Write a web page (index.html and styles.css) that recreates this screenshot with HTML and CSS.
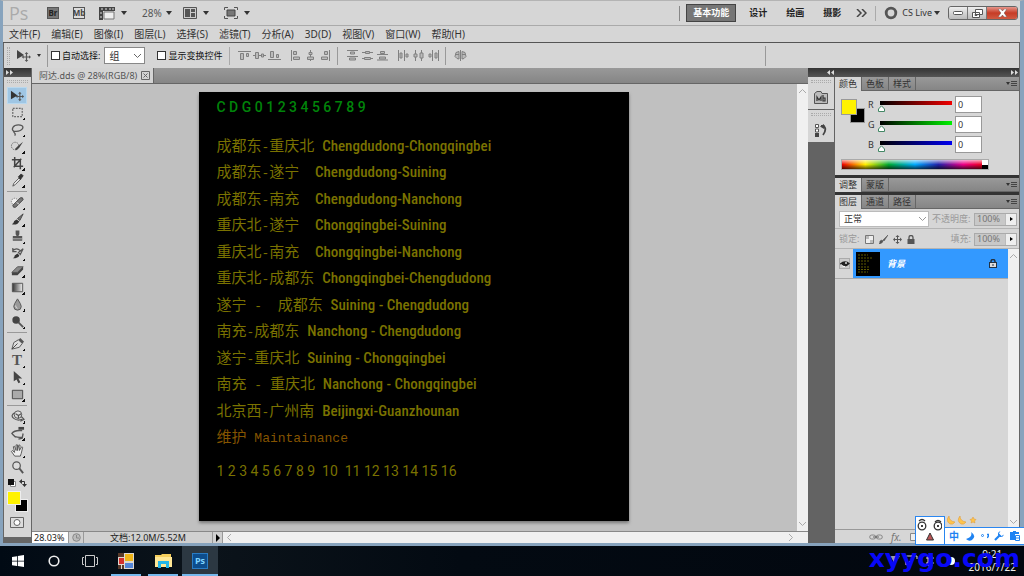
FILE: index.html
```html
<!DOCTYPE html>
<html lang="zh-CN">
<head>
<meta charset="utf-8">
<title>阿达.dds @ 28%(RGB/8)</title>
<link rel="stylesheet" href="styles.css">
</head>
<body>
<div class="window">
  <header class="appbar">
    <span class="logo">Ps</span>
    <button class="box dark" aria-label="Bridge">Br</button>
    <button class="box" aria-label="Mini Bridge">Mb</button>
    <button class="drop" aria-label="查看额外内容"><svg width="16" height="13" viewBox="0 0 16 13"><path d="M0 0h16v4H4v9H0z" fill="#444"/><path d="M2 2h2M6 2h2M10 2h2M13 2h2M2 5v2M2 9v2" stroke="#ddd"/><path d="M5 5h10v7H5z" fill="#eee" stroke="#777"/></svg><i class="caret"></i></button>
    <button class="drop zoomlevel">28%<i class="caret"></i></button>
    <button class="drop" aria-label="排列文档"><svg width="14" height="12" viewBox="0 0 14 12"><path d="M.5.5h13v11H.5z" fill="#ccc" stroke="#555"/><path d="M2 2h5v8H2zM8 2h4v3H8zM8 6h4v4H8z" fill="#555"/></svg><i class="caret"></i></button>
    <button class="drop" aria-label="屏幕模式"><svg width="14" height="12" viewBox="0 0 14 12"><path d="M.5 3V.5H4M10 .5h3.500V3M13.500 9v2.500H10M4 11.500H.5V9" fill="none" stroke="#555"/><path d="M3 3h8v6H3z" fill="#777" stroke="#444"/></svg><i class="caret"></i></button>
    <div class="workspaces">
      <button class="ws active">基本功能</button>
      <button class="ws">设计</button>
      <button class="ws">绘画</button>
      <button class="ws">摄影</button>
      <button class="more" aria-label="更多"><svg width="11" height="8" viewBox="0 0 11 8"><path d="M1 0l4 4-4 4M6 0l4 4-4 4" fill="none" stroke="#444" stroke-width="1.500"/></svg></button>
    </div>
    <button class="cslive"><svg width="14" height="14" viewBox="0 0 14 14"><circle cx="7" cy="7" r="4.800" fill="none" stroke="#555" stroke-width="2.800"/></svg>CS Live<i class="caret"></i></button>
    <div class="winbtns">
      <button aria-label="最小化"><svg width="10" height="5" viewBox="0 0 10 5"><rect x=".5" y=".5" width="9" height="3" rx="1" fill="#fff" stroke="#555"/></svg></button>
      <button aria-label="还原"><svg width="11" height="9" viewBox="0 0 11 9"><path d="M3.500.5h7v5h-7zM.5 3.500h7v5h-7z" fill="#fff" stroke="#555"/><path d="M3 5.500h2v1H3z" fill="#fff" stroke="#555"/></svg></button>
      <button class="close" aria-label="关闭"><svg width="9" height="8" viewBox="0 0 9 8"><path d="M0 0h3l1.500 2L6 0h3L6.200 4 9 8H6L4.500 6 3 8H0l2.800-4z" fill="#fff" stroke="#644" stroke-width=".5"/></svg></button>
    </div>
  </header>

  <nav class="menubar">
    <button>文件(F)</button><button>编辑(E)</button><button>图像(I)</button><button>图层(L)</button><button>选择(S)</button><button>滤镜(T)</button><button>分析(A)</button><button>3D(D)</button><button>视图(V)</button><button>窗口(W)</button><button>帮助(H)</button>
  </nav>

  <div class="options">
    <i class="vgrip"></i>
    <button class="drop current" aria-label="移动工具"><svg width="14" height="12" viewBox="0 0 14 12"><path d="M0 0l7 5-7 4z" fill="#444"/><path d="M9.500 3.500v7M6 7h7" stroke="#555" stroke-width="1.200"/><path d="M9.500 2l1.800 2H7.700zM9.500 12l1.800-2H7.700zM4.700 7l2-1.800v3.600zM14 7l-2-1.800v3.600z" fill="#555"/></svg><i class="caret small"></i></button>
    <label class="check"><input type="checkbox">自动选择:</label>
    <select class="group" aria-label="自动选择"><option>组</option></select>
    <label class="check"><input type="checkbox">显示变换控件</label>
    <div class="set">
      <button aria-label="顶对齐"><svg class="al" viewBox="0 0 13 11"><path d="M0 1.500h13"/><path d="M2.500 3.500h3v6h-3zM8.500 3.500h2v3h-2z"/></svg></button>
      <button aria-label="垂直居中对齐"><svg class="al" viewBox="0 0 13 11"><path d="M0 5.500h13"/><path d="M2.500 2.500h3v6h-3zM8.500 4h2v3h-2z"/></svg></button>
      <button aria-label="底对齐"><svg class="al" viewBox="0 0 13 11"><path d="M0 9.500h13"/><path d="M2.500 1.500h3v6h-3zM8.500 4.500h2v3h-2z"/></svg></button>
    </div>
    <div class="set">
      <button aria-label="左对齐"><svg class="al" viewBox="0 0 13 11"><path d="M2.500 0v11"/><path d="M4.500 1.500h3v3h-3zM4.500 7h6v2.500h-6z"/></svg></button>
      <button aria-label="水平居中对齐"><svg class="al" viewBox="0 0 13 11"><path d="M6.500 0v11"/><path d="M5 2.500h3v2H5zM3.500 7h6v2.500h-6z"/></svg></button>
      <button aria-label="右对齐"><svg class="al" viewBox="0 0 13 11"><path d="M10.500 0v11"/><path d="M5.500 1.500h3v3h-3zM2.500 7h6v2.500h-6z"/></svg></button>
    </div>
    <div class="set ruled">
      <button aria-label="按顶分布"><svg class="al" viewBox="0 0 13 11"><path d="M1 .5h11M1 6.500h11"/><path d="M4.500 2h4v2h-4zM3.500 8h6v2h-6z"/></svg></button>
      <button aria-label="垂直居中分布"><svg class="al" viewBox="0 0 13 11"><path d="M1 2.500h11M1 8.500h11"/><path d="M4.500 1.500h4v2h-4zM3.500 7.500h6v2h-6z"/></svg></button>
      <button aria-label="按底分布"><svg class="al" viewBox="0 0 13 11"><path d="M1 4.500h11M1 10h11"/><path d="M4.500 1.500h4v2h-4zM3.500 7h6v2h-6z"/></svg></button>
    </div>
    <div class="set">
      <button aria-label="按左分布"><svg class="al" viewBox="0 0 13 11"><path d="M1.500 0v11M7.500 0v11"/><path d="M3 3h2v5H3zM9 4h2v3H9z"/></svg></button>
      <button aria-label="水平居中分布"><svg class="al" viewBox="0 0 13 11"><path d="M3.500 0v11M9.500 0v11"/><path d="M2 4h3v3H2zM8 3h3v5H8z"/></svg></button>
      <button aria-label="按右分布"><svg class="al" viewBox="0 0 13 11"><path d="M5.500 0v11M11.500 0v11"/><path d="M2 4h2v3H2zM8 3h2v5H8z"/></svg></button>
    </div>
    <div class="set ruled">
      <button aria-label="自动对齐图层"><svg class="al" viewBox="0 0 13 11"><path d="M6.500 0v11M5 1.500L2 2.500l-1 4 2 2 2 .5zM8 1.500l3 1 1 4-2 2-2 .5zM2 4.500h3M8 4.500h3" /></svg></button>
    </div>
    <i class="endrule"></i>
  </div>

  <div class="workspace">
    <aside class="tools">
      <div class="dockhead"><svg width="7" height="5" viewBox="0 0 7 5"><path d="M0 0l3 2.500L0 5zM4 0l3 2.500L4 5z" fill="#ddd"/></svg></div>
      <i class="hgrip"></i>
      <div class="toollist">
        <button class="on" aria-label="移动"><svg viewBox="0 0 16 16"><path d="M1 3l7 5-7 4z" fill="#333"/><path d="M10.500 5.500v7M7 9h7" stroke="#555" stroke-width="1.200"/><path d="M10.500 4l1.800 2H8.700zM10.500 14l1.800-2H8.700zM6 9l2-1.800v3.600zM15 9l-2-1.800v3.600z" fill="#555"/></svg></button>
        <button class="sub" aria-label="矩形选框"><svg viewBox="0 0 16 16"><path d="M3 3.500h10v9H3z" fill="none" stroke="#444" stroke-dasharray="2 1.200"/></svg></button>
        <button class="sub" aria-label="套索"><svg viewBox="0 0 16 16"><path d="M4 10C1 8 3 3 9 3s6 4 2 6-7 0-7 1.500 3 1 1 4" fill="none" stroke="#555" stroke-width="1.300"/></svg></button>
        <button class="sub" aria-label="快速选择"><svg viewBox="0 0 16 16"><circle cx="5.500" cy="7.500" r="4" fill="none" stroke="#666" stroke-dasharray="1.500 1"/><path d="M5 11l4-4 5-4-4 6-3 3z" fill="#444"/></svg></button>
        <button class="sub" aria-label="裁剪"><svg viewBox="0 0 16 16"><path d="M5 1v10h9M2 4h9v10M4 12l8-9" fill="none" stroke="#444" stroke-width="1.600"/></svg></button>
        <button class="sub" aria-label="吸管"><svg viewBox="0 0 16 16"><path d="M3 14l1-3 6-6 1.500 1.500-6 6z" fill="#eee" stroke="#555"/><path d="M9 4l3-3 2 2-3 4z" fill="#333" stroke="#333"/></svg></button>
        <hr>
        <button class="sub" aria-label="修复画笔"><svg viewBox="0 0 16 16"><circle cx="5" cy="7" r="3.500" fill="#eee" stroke="#777" stroke-dasharray="1.500 1"/><path d="M3 11l8-8q3-1 3 2l-8 8q-3 1-3-2z" fill="#777" stroke="#444"/><path d="M7 8l3 2" stroke="#ddd"/></svg></button>
        <button class="sub" aria-label="画笔"><svg viewBox="0 0 16 16"><path d="M2 13q2-1 2.500-3.500L7 8l3 2-2 2.500q-3 1.500-6 .5z" fill="#333"/><path d="M8 7l6-5-3.500 7z" fill="#777" stroke="#444"/></svg></button>
        <button class="sub" aria-label="仿制图章"><svg viewBox="0 0 16 16"><path d="M6 1.500h4v4l-1 2h4v5H3v-5h4l-1-2z" fill="#555"/><path d="M3 10.500h10" stroke="#bbb"/></svg></button>
        <button class="sub" aria-label="历史记录画笔"><svg viewBox="0 0 16 16"><path d="M3 13q2-1 2-3l3-2 2 2q-1 3-7 3z" fill="#333"/><path d="M9 7l5-4-3 6zM3 5q4-4 8 0M3 2v4h4" fill="none" stroke="#555" stroke-width="1.300"/></svg></button>
        <button class="sub" aria-label="橡皮擦"><svg viewBox="0 0 16 16"><path d="M2 10l6-6h6l-6 6z" fill="#888" stroke="#555"/><path d="M2 10h6l6-6v3l-6 6H2z" fill="#444"/></svg></button>
        <button class="sub" aria-label="渐变"><svg viewBox="0 0 16 16"><defs><linearGradient id="g"><stop stop-color="#333"/><stop offset="1" stop-color="#eee"/></linearGradient></defs><path d="M2.500 3.500h11v9h-11z" fill="url(#g)" stroke="#555"/></svg></button>
        <button class="sub" aria-label="模糊"><svg viewBox="0 0 16 16"><path d="M8 2q4 6 4 8a4 4 0 0 1-8 0q0-2 4-8z" fill="#999" stroke="#555"/><path d="M6 9q0 3 2 3" fill="none" stroke="#ddd"/></svg></button>
        <button class="sub" aria-label="减淡"><svg viewBox="0 0 16 16"><circle cx="6.500" cy="6.500" r="4" fill="#444"/><path d="M9 9l5 5" stroke="#555" stroke-width="2"/></svg></button>
        <hr>
        <button class="sub" aria-label="钢笔"><svg viewBox="0 0 16 16"><path d="M2 14l2-7 5-3 4 4-3 4z" fill="#ddd" stroke="#555"/><path d="M9 4l2-2 4 4-2 2z" fill="#555"/><path d="M2 14l6-6" stroke="#444"/></svg></button>
        <button class="sub type" aria-label="文字">T</button>
        <button class="sub" aria-label="路径选择"><svg viewBox="0 0 16 16"><path d="M4 1v11l3-2 2 4 2-1-2-4h4z" fill="#444"/></svg></button>
        <button class="sub" aria-label="矩形"><svg viewBox="0 0 16 16"><path d="M2.500 3.500h11v9h-11z" fill="#aaa" stroke="#444"/></svg></button>
        <hr>
        <button class="sub" aria-label="3D 旋转"><svg viewBox="0 0 16 16"><circle cx="8.500" cy="6" r="4" fill="#ddd" stroke="#555"/><path d="M5 4Q0 7 4 10t9 1M12 8l3 3-4 2M6 5l3 2 3-2M9 7v3" fill="none" stroke="#555" stroke-width="1.200"/></svg></button>
        <button class="sub" aria-label="3D 相机"><svg viewBox="0 0 16 16"><path d="M13 5Q5 4 2 8q3 5 11 4M6 12l-3-3M14 8l-1 5-4 1" fill="none" stroke="#555" stroke-width="1.400"/><path d="M9 1h6v3H9z" fill="#444"/></svg></button>
        <button class="sub" aria-label="抓手"><svg viewBox="0 0 16 16"><path d="M5 14L1.500 9l1-1L5 10 3.500 4l1.300-.5L6.500 8V2H8v6l1.500-6 1.300.5L10 8l2.500-4 1 .7L12 11l-1 3z" fill="#eee" stroke="#555"/></svg></button>
        <button aria-label="缩放"><svg viewBox="0 0 16 16"><circle cx="7" cy="6" r="4" fill="#ddd" stroke="#555" stroke-width="1.300"/><path d="M10 9l4 5" stroke="#555" stroke-width="2"/></svg></button>
      </div>
      <div class="minis"><svg width="8" height="8" viewBox="0 0 8 8"><path d="M2.500 2.500h5v5h-5z" fill="#fff" stroke="#888"/><path d="M0 0h6v6H0z" fill="#111"/></svg><svg width="8" height="8" viewBox="0 0 8 8"><path d="M1 2.500h4.500V7" fill="none" stroke="#333"/><path d="M0 2.500L3 0v5zM5.500 8L3 5h5z" fill="#333"/></svg></div>
      <div class="fgbg"><i class="fg"></i><i class="bg"></i></div>
      <button class="mask" aria-label="快速蒙版"><svg width="14" height="11" viewBox="0 0 14 11"><path d="M.5.5h13v10H.5z" fill="#ddd" stroke="#666"/><circle cx="7" cy="5.500" r="3" fill="#fff" stroke="#666"/></svg></button>
    </aside>

    <main class="document">
      <div class="tabs"><div class="doctab">阿达.dds @ 28%(RGB/8)<button aria-label="关闭文档"><svg width="9" height="9" viewBox="0 0 9 9"><path d="M.5.5h8v8h-8zM2.500 2.500l4 4M6.500 2.500l-4 4" fill="none" stroke="#666"/></svg></button></div></div>
      <div class="view">
        <div class="stage">
          <article class="art">
            <h1>C D G 0 1 2 3 4 5 6 7 8 9</h1>
            <ul>
              <li><b>成都东<i>-</i>重庆北<i> </i></b>Chengdudong-Chongqingbei</li>
              <li><b>成都东<i>-</i>遂宁<i>  </i></b>Chengdudong-Suining</li>
              <li><b>成都东<i>-</i>南充<i>  </i></b>Chengdudong-Nanchong</li>
              <li><b>重庆北<i>-</i>遂宁<i>  </i></b>Chongqingbei-Suining</li>
              <li><b>重庆北<i>-</i>南充<i>  </i></b>Chongqingbei-Nanchong</li>
              <li><b>重庆北<i>-</i>成都东<i> </i></b>Chongqingbei-Chengdudong</li>
              <li><b>遂宁<i> -  </i>成都东<i> </i></b>Suining - Chengdudong</li>
              <li><b>南充<i>-</i>成都东<i> </i></b>Nanchong - Chengdudong</li>
              <li><b>遂宁<i>-</i>重庆北<i> </i></b>Suining - Chongqingbei</li>
              <li><b>南充<i> - </i>重庆北<i> </i></b>Nanchong - Chongqingbei</li>
              <li><b>北京西<i>-</i>广州南<i> </i></b>Beijingxi-Guanzhounan</li>
              <li class="maint"><b>维护<i> </i></b>Maintainance</li>
            </ul>
            <p>1 2 3 4 5 6 7 8 9  10  11 12 13 14 15 16</p>
          </article>
        </div>
        <div class="vscroll"><svg width="7" height="4" viewBox="0 0 7 4"><path d="M0 4l3.500-3.500L7 4" fill="none" stroke="#aaa"/></svg><svg width="7" height="4" viewBox="0 0 7 4"><path d="M0 0l3.500 3.500L7 0" fill="none" stroke="#aaa"/></svg></div>
      </div>
      <footer class="status">
        <input value="28.03%" aria-label="缩放比例">
        <span class="clock"><svg width="9" height="9" viewBox="0 0 9 9"><circle cx="4.500" cy="4.500" r="3.800" fill="#bbb" stroke="#888"/><path d="M4.500 2v3H7" fill="none" stroke="#888"/></svg></span>
        <span class="docsize">文档:12.0M/5.52M</span>
        <button aria-label="状态菜单"><svg width="4" height="8" viewBox="0 0 4 8"><path d="M0 0l4 4-4 4z"/></svg></button>
        <div class="hscroll"><svg width="4" height="7" viewBox="0 0 4 7"><path d="M4 0L.5 3.500 4 7" fill="none" stroke="#aaa"/></svg><svg width="4" height="7" viewBox="0 0 4 7"><path d="M0 0l3.500 3.500L0 7" fill="none" stroke="#aaa"/></svg></div>
      </footer>
    </main>

    <aside class="docks">
      <div class="dockhead right"><svg width="7" height="5" viewBox="0 0 7 5"><path d="M3 0L0 2.500 3 5zM7 0L4 2.500 7 5z" fill="#ddd"/></svg><svg width="7" height="5" viewBox="0 0 7 5"><path d="M0 0l3 2.500L0 5zM4 0l3 2.500L4 5z" fill="#ddd"/></svg></div>
      <div class="dockbody">
        <div class="icondock">
          <div class="cell"><i class="hgrip"></i><button aria-label="Mini Bridge"><svg width="14" height="13" viewBox="0 0 14 13"><path d="M.5 12.500V2.500L3 .5h4l1 2h5.500v10z" fill="#bbb" stroke="#555"/><path d="M3 10V6l2 3 2-3v4M9 4v6h2V7H9" fill="none" stroke="#333" stroke-width="1.200"/></svg></button></div>
          <div class="cell"><i class="hgrip"></i><button aria-label="历史记录"><svg width="12" height="13" viewBox="0 0 12 13"><path d="M.5.5h3v3h-3zM.5 5h3v3h-3z" fill="#fff" stroke="#555"/><path d="M0 9h4v4H0z" fill="#444"/><path d="M6 2h3q3 4-1 9" fill="none" stroke="#444" stroke-width="1.800"/><path d="M5 2.500L9 0v5z" fill="#444"/></svg></button></div>
        </div>
        <div class="panels">
          <section>
            <div class="ptabs"><button class="on">颜色</button><button>色板</button><button>样式</button><button class="pm" aria-label="面板菜单"></button></div>
            <div class="color">
              <div class="fgbg"><i class="fg"></i><i class="bg"></i></div>
              <div class="rgb">
                <label for="r">R</label><input class="r" type="range" max="255" value="0" aria-label="R 滑块"><input id="r" class="num" value="0">
                <label for="gg">G</label><input class="gr" type="range" max="255" value="0" aria-label="G 滑块"><input id="gg" class="num" value="0">
                <label for="bl">B</label><input class="bl" type="range" max="255" value="0" aria-label="B 滑块"><input id="bl" class="num" value="0">
              </div>
              <div class="spectrum"><i></i></div>
            </div>
          </section>
          <section><div class="ptabs"><button class="on">调整</button><button>蒙版</button><button class="pm" aria-label="面板菜单"></button></div></section>
          <section class="layers">
            <div class="ptabs"><button class="on">图层</button><button>通道</button><button>路径</button><button class="pm" aria-label="面板菜单"></button></div>
            <div class="lrow"><select aria-label="混合模式"><option>正常</option></select><label for="op">不透明度:</label><span class="pct"><input id="op" value="100%"><button aria-label="调整不透明度"><svg width="3" height="4" viewBox="0 0 3 4"><path d="M0 0l3 2-3 2z"/></svg></button></span></div>
            <div class="lrow"><span>锁定:</span><span class="locks"><svg width="9" height="9" viewBox="0 0 9 9"><path d="M.5.5h8v8h-8z" fill="#eee" stroke="#777"/><path d="M1 1h3v3H1zM5 5h3v3H5z" fill="#bbb"/></svg><svg width="9" height="9" viewBox="0 0 9 9"><path d="M0 9q1-1 1-3l2-1 1 1q0 2-4 3zM4 5l5-5-4 6z" fill="#555" stroke="#555" stroke-width=".6"/></svg><svg width="9" height="9" viewBox="0 0 9 9"><path d="M4.500 1v7M1 4.500h7" stroke="#555"/><path d="M4.500 0l2 2h-4zM4.500 9l2-2h-4zM0 4.500l2-2v4zM9 4.500l-2-2v4z" fill="#555"/></svg><svg width="8" height="9" viewBox="0 0 8 9"><path d="M2 4V2.500a2 2 0 0 1 4 0V4" fill="none" stroke="#555" stroke-width="1.300"/><rect x=".5" y="4" width="7" height="5" fill="#555"/></svg></span><label class="fill" for="fi">填充:</label><span class="pct"><input id="fi" value="100%"><button aria-label="调整填充"><svg width="3" height="4" viewBox="0 0 3 4"><path d="M0 0l3 2-3 2z"/></svg></button></span></div>
            <div class="llist">
              <div class="litems">
                <div class="layer">
                  <button class="eye" aria-label="可见性"><svg width="10" height="8" viewBox="0 0 10 8"><path d="M0 3.500Q5-1 10 3.500 5 9 0 4z" fill="#222"/><path d="M1 4.500Q3 7 5 6.500" stroke="#fff" fill="none"/><circle cx="6" cy="3" r="1" fill="#ddd"/></svg></button>
                  <div class="lsel"><svg class="thumb" width="24" height="24" viewBox="0 0 24 24"><path d="M0 0h24v24H0z"/><path d="M2 3h10M2 6h14M2 9h11M2 12h9M2 15h12M2 17.500h12M2 20h10" stroke="#5f5a00" stroke-dasharray="2 1"/></svg><em>背景</em><svg width="8" height="9" viewBox="0 0 8 9"><path d="M2 4V2.500a2 2 0 0 1 4 0V4" fill="none" stroke="#234" stroke-width="1.500"/><rect x=".5" y="3.500" width="7" height="5" fill="#ddd" stroke="#234"/><path d="M3 6h2" stroke="#234"/></svg></div>
                </div>
              </div>
              <div class="vscroll"><svg width="7" height="4" viewBox="0 0 7 4"><path d="M0 4l3.500-3.500L7 4" fill="none" stroke="#aaa"/></svg><svg width="7" height="4" viewBox="0 0 7 4"><path d="M0 0l3.500 3.500L7 0" fill="none" stroke="#aaa"/></svg></div>
            </div>
            <div class="lfoot"><svg width="14" height="6" viewBox="0 0 14 6"><rect x=".7" y="1" width="6" height="4" rx="2" fill="none" stroke="#888"/><rect x="7.300" y="1" width="6" height="4" rx="2" fill="none" stroke="#888"/><path d="M4 3h6" stroke="#666"/></svg><em>fx.</em><svg width="10" height="8" viewBox="0 0 10 8"><path d="M.5.5h9v7h-9z" fill="#eee" stroke="#888"/></svg></div>
          </section>
        </div>
      </div>
    </aside>
  </div>
</div>

<footer class="taskbar">
  <button aria-label="开始"><svg width="12" height="12" viewBox="0 0 12 12"><path d="M0 2l5-.8V5.700H0zM5.800 1L12 0v5.700H5.800zM0 6.500h5V11l-5-.8zM5.800 6.500H12V12l-6.200-.9z" fill="#fff"/></svg></button>
  <button aria-label="Cortana"><svg width="12" height="12" viewBox="0 0 12 12"><circle cx="6" cy="6" r="4.800" fill="none" stroke="#eee" stroke-width="1.600"/></svg></button>
  <button aria-label="任务视图"><svg width="16" height="12" viewBox="0 0 16 12"><path d="M3.500.5h9v11h-9zM2 2.500H.5v7H2M14 2.500h1.500v7H14" fill="none" stroke="#ccc"/></svg></button>
  <button class="run" aria-label="应用"><svg width="16" height="16" viewBox="0 0 16 16"><path d="M0 0h16v16H0z" fill="#ddd8d0"/><path d="M7 1h8v7H7z" fill="#eeb417"/><path d="M1 5h5v6H1z" fill="#d3302c"/><path d="M7 10h8v5H7z" fill="#5385d8"/><path d="M0 0h6v4H0zM0 12h3v4H0zM4 12h2v4H4z" fill="#573a2b"/></svg></button>
  <button class="run" aria-label="文件资源管理器"><svg width="17" height="14" viewBox="0 0 17 14"><path d="M0 1h6l1-1h9v13H0z" fill="#f5ce5c"/><path d="M0 3h17v10H0z" fill="#ffe796"/><path d="M3 7h11v7h-3v-4H6v4H3z" fill="#25b6e8"/></svg></button>
  <button class="run front" aria-label="Photoshop"><span class="psicon">Ps</span></button>
  <div class="tray">
    <svg width="70" height="12" viewBox="0 0 70 12"><path d="M0 1h10L5 9z" fill="#99a"/><path d="M16 10V1h11v3M20 6v5M36 3h8M36 8h8M38 1v10M42 1v10" fill="none" stroke="#ddd"/><circle cx="61" cy="6" r="4" fill="#fff"/></svg>
    <div class="time">9:21<br>2016/7/22</div>
  </div>
</footer>

<div class="ime">
  <div class="stars"><svg width="30" height="9" viewBox="0 0 30 9"><path d="M2 0q0 5 6 6-2 3-5 2Q-2 5 2 0zM13 0q0 5 6 6-2 3-5 2-5-3-1-8zM26 1l1 2 2 .5L27.500 5l.5 2-2-1-2 1 .5-2L23 3.500l2-.5z" fill="#ffc44c" stroke="#dd9734" stroke-width=".5"/></svg></div>
  <div class="face"><svg width="26" height="26" viewBox="0 0 26 26"><g fill="none" stroke="#333" stroke-width="1.300"><circle cx="6" cy="9" r="3.800"/><circle cx="22" cy="9" r="3.800"/><path d="M3 4q3-3 6 0M19 5q3-3 6 0"/></g><circle cx="6" cy="9" r="1"/><circle cx="22" cy="9" r="1"/><path d="M14 16l3.500 7h-7z" fill="#b55" stroke="#333"/></svg></div>
  <div class="imebar"><span>中</span><svg width="10" height="9" viewBox="0 0 10 9"><path d="M6 0q2 5-5 7 3 3 6 1 5-4-1-8z" fill="#1f83f2"/></svg><svg width="8" height="6" viewBox="0 0 8 6"><circle cx="1.500" cy="2.500" r="1" fill="none" stroke="#1f83f2"/><path d="M6 1.500h1.500q0 3-1.500 3" fill="none" stroke="#1f83f2" stroke-width="1.400"/></svg><svg width="10" height="10" viewBox="0 0 10 10"><path d="M1 9l5-5" stroke="#1f83f2" stroke-width="2.200"/><path d="M6.500 0L5 2.500 7.500 5 10 3.500Q9 6.500 6 6L4 4Q3.500 1 6.500 0z" fill="#1f83f2"/></svg><svg width="10" height="10" viewBox="0 0 10 10"><path d="M0 1h3V0h3v1h3v2H5v6H0z" fill="#1f83f2"/><path d="M5.500 4.500h4v5h-4zM6 7h3" fill="#fff" stroke="#1f83f2"/></svg></div>
</div>
<div class="watermark">xyygo.com</div>
</body>
</html>
```

FILE: styles.css
```css
* { box-sizing: border-box; }
body {
  margin: 0;
  height: 100vh;
  display: flex;
  flex-direction: column;
  overflow: hidden;
  position: relative;
  background: #02070f;
  color: #333;
  font: 10px/12px "Noto Sans", "Noto Sans CJK SC", sans-serif;
}
button, input, select { font: inherit; color: inherit; margin: 0; padding: 0; border: 0; background: none; border-radius: 0; }
button { display: flex; align-items: center; justify-content: center; white-space: nowrap; flex: none; }
svg { display: block; flex: none; }

.window {
  flex: 1;
  min-height: 0;
  display: flex;
  flex-direction: column;
  background: #d6d6d6;
  border: solid #87a3bd;
  border-width: 1px 4px 3px 3px;
  border-top-color: #b4b4b4;
}
.caret { border: solid transparent; border-width: 4px 3px 0; border-top-color: #333; margin-left: 6px; }
.caret.small { border-width: 3px 2px 0; }

.appbar { display: flex; align-items: center; height: 25px; padding: 0 2px 0 6px; border-bottom: 1px solid #aaa; flex: none; }
.logo { font: 18px/20px "Open Sans", sans-serif; color: #aaa; width: 38px; }
.box { width: 12px; height: 12px; border: 1px solid #555; color: #444; background: #ddd; font: bold 8px/10px "Noto Sans", sans-serif; margin-right: 14px; }
.box.dark { background: #777; color: #222; }
.drop { margin-right: 15px; }
.drop.zoomlevel { margin: 0 11px 0 0; color: #555; }
.zoomlevel .caret { margin-left: 4px; }
.workspaces { display: flex; align-items: center; gap: 19px; margin-left: auto; border-left: 1px solid #888; padding: 0 8px 0 6px; height: 15px; }
.ws { color: #222; font-weight: bold; line-height: 14px; font-size: 9px; }
.ws.active { width: 50px; height: 18px; margin-right: -6px; background: #767676; color: #fff; border: 1px solid #444; }
.more { margin: 0 0 0 -4px; }
.cslive { border-left: 1px solid #aaa; padding-left: 8px; margin-right: 8px; height: 15px; gap: 4px; font-size: 9px; }
.cslive .caret { margin-left: -2px; }
.winbtns { display: flex; border: 1px solid #666; border-radius: 3px; height: 14px; overflow: hidden; }
.winbtns button { width: 19px; border-right: 1px solid #777; background: linear-gradient(#eee, #bbb); }
.winbtns .close { width: 30px; border: 0; background: linear-gradient(#e6958a, #c63c26 50%, #d05a42); }

.menubar { display: flex; align-items: center; gap: 11px; height: 17px; padding-left: 6px; border-bottom: 1px solid #555; flex: none; }

.options { display: flex; align-items: center; height: 25px; padding-left: 3px; border-left: 1px solid #666; border-right: 1px solid #666; flex: none; }
.vgrip { width: 3px; height: 18px; border: dotted #aaa; border-width: 0 1px; margin-right: 7px; }
.current { height: 22px; margin-right: 3px; padding-right: 6px; border-right: 1px solid #999; }
.check { display: flex; align-items: center; gap: 2px; color: #111; font-size: 9px; white-space: nowrap; }
.check input { appearance: none; width: 9px; height: 9px; background: #fff; border: 1px solid #333; }
.options select { appearance: none; width: 41px; height: 17px; margin: 0 12px 0 4px; padding-left: 4px; background: #fff url("data:image/svg+xml,%3Csvg xmlns='http://www.w3.org/2000/svg' width='7' height='4'%3E%3Cpath d='M0 0l3.500 3.500L7 0' fill='none' stroke='%23666'/%3E%3C/svg%3E") no-repeat right 3px center; border: 1px solid #888; }
.set { display: flex; align-items: center; gap: 2px; padding: 0 5px 0 8px; }
.set + .set:not(.ruled) { padding-left: 3px; }
.check + .set { margin-left: 7px; border-left: 1px solid #aaa; height: 18px; }
.set.ruled { border-left: 1px solid #999; height: 18px; }
.al { width: 13px; height: 11px; fill: #bbb; stroke: #808080; }
.endrule { margin-left: auto; margin-right: 253px; width: 1px; height: 20px; background: #999; }

.workspace { flex: 1; min-height: 0; display: flex; border: solid #666; border-width: 0 1px; }
.dockhead { height: 9px; flex: none; display: flex; align-items: center; padding-left: 2px; background: linear-gradient(#333, #555); }
.hgrip { display: block; height: 3px; margin: 3px 3px 4px; border: dotted #aaa; border-width: 1px 0; flex: none; }

.tools { width: 28px; display: flex; flex-direction: column; background: #d6d6d6; border-right: 1px solid #666; border-bottom: 6px solid #666; flex: none; }
.toollist { display: flex; flex-direction: column; padding: 0 4px 0 3px; }
.toollist button { position: relative; width: 20px; height: 17px; }
.toollist svg { width: 15px; height: 15px; }
.toollist .on { background: #9fc6e4; outline: 1px solid #b9d8ee; outline-offset: -1px; }
.toollist .sub::after { content: ""; position: absolute; right: 2px; bottom: 1px; width: 3px; height: 3px; background: linear-gradient(135deg, transparent 50%, #111 50%); }
.toollist hr { width: 20px; margin: 2px 0; border: 0; border-top: 1px solid #999; }
.toollist .type { font: bold 15px/17px "Liberation Serif", serif; color: #555; }
.minis { display: flex; justify-content: space-between; padding: 3px 4px 4px; }
.fgbg { display: grid; grid-template-columns: 8px 6px 7px; grid-template-rows: 8px 6px 7px; margin-left: 3px; }
.fgbg i { border: 1px solid #eee; }
.fgbg .fg { grid-area: 1 / 1 / 3 / 3; background: #fff200; z-index: 1; }
.fgbg .bg { grid-area: 2 / 2 / 4 / 4; background: #000; }
.mask { margin: 5px auto 0 6px; }

.document { flex: 1; min-width: 0; display: flex; flex-direction: column; background: #c0c0c0; }
.tabs { height: 16px; flex: none; background: linear-gradient(#999, #858585); border-bottom: 1px solid #666; display: flex; }
.doctab { display: flex; align-items: center; gap: 4px; padding: 0 3px 0 7px; background: #d4d4d4; border-right: 1px solid #666; color: #555; font-size: 9px; white-space: nowrap; }
.view { flex: 1; min-height: 0; display: flex; }
.stage { flex: 1; min-width: 0; display: flex; align-items: center; justify-content: center; padding: 0 2px 2px 0; }
.art { width: 430px; background: #000; box-shadow: 0 2px 3px #777; color: #7a7200; padding: 5px 0 40px 18px; font: 500 15px/20px "Roboto Condensed", "Roboto", sans-serif; }
.art h1 { margin: 0; font: 500 14px/20px "Roboto", sans-serif; color: #00840a; white-space: pre; }
.art ul { list-style: none; margin: 16px 0 0; padding: 0; height: 318px; display: grid; grid-template-rows: repeat(12, 1fr); align-items: center; }
.art li, .art p { white-space: pre; }
.art b { font: 15px/20px "Noto Sans CJK SC", sans-serif; }
.art b i { font: 13px/20px "Liberation Mono", monospace; }
.art .maint { color: #845400; font: 13px/20px "Liberation Mono", monospace; }
.art p { margin: 10px 0 0; font: 14px/20px "Roboto", sans-serif; }
.vscroll { width: 11px; flex: none; background: #f0f0f0; display: flex; flex-direction: column; justify-content: space-between; align-items: center; padding: 5px 0; }
.status { height: 12px; flex: none; display: flex; align-items: stretch; border-top: 1px solid #888; background: #d0d0d0; color: #222; font-size: 9px; }
.status input { width: 36px; background: #fff; padding-left: 2px; }
.clock { width: 16px; display: flex; align-items: center; justify-content: center; border: solid #999; border-width: 0 1px; }
.docsize { width: 128px; text-align: center; }
.status button { width: 11px; border: solid #999; border-width: 0 1px; }
.hscroll { flex: 1; display: flex; justify-content: space-between; align-items: center; background: #f0f0f0; padding: 0 15px 0 4px; }

.docks { width: 211px; display: flex; flex-direction: column; flex: none; background: #636363; }
.dockhead.right { justify-content: space-between; padding: 0 1px 0 19px; }
.dockbody { flex: 1; min-height: 0; display: flex; }
.icondock { width: 27px; padding-right: 1px; flex: none; }
.cell { height: 32px; margin-bottom: 1px; padding-top: 3px; background: #d6d6d6; }
.cell .hgrip { margin: 0 3px 8px; }
.cell button { margin: 0 auto; }
.panels { flex: 1; min-width: 0; display: flex; flex-direction: column; gap: 3px; background: #333; }
.panels section { background: #d6d6d6; }
.ptabs { height: 14px; display: flex; background: linear-gradient(#999, #858585); border-bottom: 1px solid #666; }
.ptabs button { width: 27px; border-right: 1px solid #666; color: #333; font-size: 9px; }
.ptabs .on { background: #d6d6d6; height: 14px; }
.ptabs .pm { margin-left: auto; width: 11px; border: 0; margin-right: 2px; background: url("data:image/svg+xml,%3Csvg xmlns='http://www.w3.org/2000/svg' width='11' height='7'%3E%3Cpath d='M0 2h4L2 5z' fill='%23333'/%3E%3Cpath d='M5 1.500h6M5 3.500h6M5 5.500h6' stroke='%23444'/%3E%3C/svg%3E") no-repeat center; }
.color { display: grid; grid-template-columns: 27px auto 1fr; padding: 5px 5px 5px 6px; }
.color .fgbg { margin: 3px 0 0; grid-template-columns: 9px 7px 8px; grid-template-rows: 9px 7px 8px; }
.color .fgbg i { border-color: #999; }
.rgb { display: grid; grid-template-columns: 9px 76px 27px; column-gap: 1px; row-gap: 3px; align-items: center; font-size: 9px; }
.rgb .num { height: 17px; background: #fff; border: 1px solid #999; padding-left: 2px; width: 27px; }
.rgb input[type=range] { appearance: none; height: 14px; width: 76px; background: linear-gradient(90deg, #000, var(--c)) 2px 3px / 72px 4px no-repeat; }
.r { --c: #f00000; }
.gr { --c: #00f000; }
.bl { --c: #0000f0; }
.rgb input::-webkit-slider-thumb { appearance: none; width: 7px; height: 7px; margin-top: 7px; background: url("data:image/svg+xml,%3Csvg xmlns='http://www.w3.org/2000/svg' width='7' height='7'%3E%3Cpath d='M3.500.8L6.500 4v2.500h-6V4z' fill='%23fff' stroke='%23486'/%3E%3C/svg%3E"); }
.spectrum { grid-column: 1 / 4; width: 148px; height: 11px; margin: 6px 0 0; border: 1px solid #aaa; display: flex; background: linear-gradient(#ffffffaa, transparent 50%, #000000aa), linear-gradient(90deg, #e00, #fe0 16%, #0a3 32%, #0af 50%, #22a 66%, #e08 83%, #e00); }
.spectrum i { margin-left: auto; width: 6px; background: linear-gradient(#fff 50%, #000 50%); }
.layers { flex: 1; min-height: 0; display: flex; flex-direction: column; }
.lrow { display: flex; align-items: center; height: 20px; padding: 2px 2px 1px 4px; border-bottom: 1px solid #b4b4b4; color: #999; flex: none; font-size: 9px; white-space: nowrap; }
.lrow select { appearance: none; width: 90px; height: 16px; padding-left: 4px; color: #333; border: 1px solid #bbb; background: #fff url("data:image/svg+xml,%3Csvg xmlns='http://www.w3.org/2000/svg' width='7' height='4'%3E%3Cpath d='M0 0l3.500 3.500L7 0' fill='none' stroke='%23999'/%3E%3C/svg%3E") no-repeat right 2px center; margin-right: 3px; }
.locks { display: flex; gap: 5px; margin-left: 6px; }
.fill { margin-left: auto; }
.pct { display: flex; width: 43px; height: 13px; margin-left: auto; border: 1px solid #aaa; color: #777; flex: none; }
.fill + .pct { margin-left: 3px; }
.pct input { width: 30px; padding-left: 2px; background: #c8c8c8; }
.pct button { flex: 1; background: #eee; border-left: 1px solid #bbb; }
.llist { flex: 1; min-height: 0; display: flex; }
.litems { flex: 1; }
.layer { display: flex; height: 30px; border-bottom: 1px solid #aaa; }
.eye { width: 11px; height: 11px; margin: auto 3px auto 4px; background: #ccc; border: 1px solid #aaa; }
.lsel { flex: 1; display: flex; align-items: center; background: #3399ff; padding: 0 11px 0 3px; }
.lsel em { margin: 0 auto 0 7px; color: #fff; font-size: 9px; font-weight: bold; }
.lfoot { height: 14px; flex: none; display: flex; align-items: center; gap: 8px; padding-left: 34px; border-top: 1px solid #999; color: #777; margin-right: 11px; }

.taskbar { height: 30px; flex: none; display: flex; background: linear-gradient(90deg, #010a14, #0b131a 20%, #030a12 45%, #02070f); }
.taskbar button { width: 36px; }
.taskbar .run { position: relative; margin-right: 1px; }
.run::after { content: ""; position: absolute; left: 3px; right: 3px; bottom: 0; height: 2px; background: #76b9ed; }
.taskbar .front { background: #2c3842; margin: 0; }
.front::after { left: 0; right: 0; }
.psicon { width: 16px; height: 16px; background: #0d4d8c; border: 1px solid #2a7cc4; color: #7fd4ff; font: bold 9px/14px "Open Sans", sans-serif; }
.tray { display: flex; align-items: center; margin-left: auto; margin-right: 8px; gap: 9px; color: #eee; }
.time { text-align: center; line-height: 13px; font-size: 10px; }

.ime { position: absolute; right: 0; bottom: 31px; width: 109px; height: 29px; }
.stars { position: absolute; left: 32px; top: 0; }
.face { position: absolute; left: 0; top: 0; width: 30px; height: 29px; background: #fff; border: 1px solid #2a86f0; z-index: 1; }
.imebar { position: absolute; left: 29px; right: 0; bottom: 0; height: 18px; display: flex; align-items: center; justify-content: space-between; padding: 0 4px; background: #fff; border: solid #2a86f0; border-width: 1px 0 1px 1px; color: #1f83f2; font-weight: bold; }
.watermark { position: absolute; right: 4px; bottom: 3px; font: bold 25px/28px "DejaVu Sans", sans-serif; color: #0808f8; }
```
